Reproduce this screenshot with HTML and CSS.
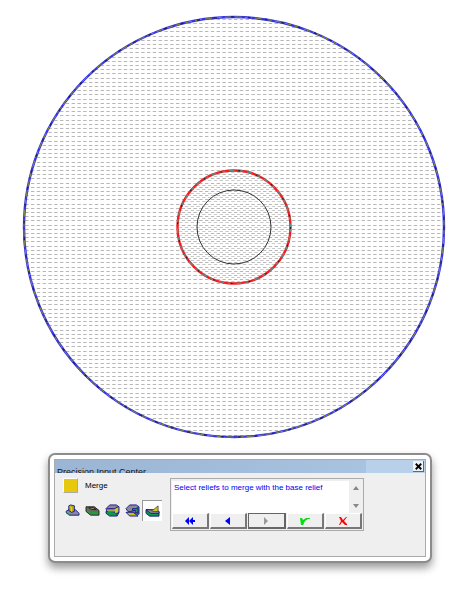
FILE: index.html
```html
<!DOCTYPE html>
<html lang="en">
<head>
<meta charset="utf-8">
<title>Precision Input Center</title>
<link rel="stylesheet" href="styles.css">
</head>
<body>
<svg class="drawing" viewBox="0 0 471 446" role="img" aria-label="Relief outline">
  <defs>
    <pattern id="hatch" x="2" y="1" width="29" height="21" patternUnits="userSpaceOnUse">
      <path d="M0 1.5h29M0 5.5h29M0 9.5h29M0 14.5h29M0 18.5h29" stroke="#b8b8b8" stroke-width="1" stroke-dasharray="3.4 2.4"/>
    </pattern>
    <pattern id="inner-hatch" x="5" y="3" width="29" height="21" patternUnits="userSpaceOnUse">
      <path d="M0 1.5h29M0 5.5h29M0 9.5h29M0 14.5h29M0 18.5h29" stroke="#cacaca" stroke-width="1" stroke-dasharray="3.4 2.4"/>
    </pattern>
  </defs>
  <circle cx="234" cy="227" r="210" fill="url(#hatch)"/>
  <circle cx="234" cy="227" r="56" fill="url(#inner-hatch)"/>
  <g fill="none">
    <circle cx="234" cy="227" r="210" stroke="#3434e4" stroke-width="2.4"/>
    <circle cx="234" cy="227" r="210" stroke="#8a8a3c" stroke-width="1" stroke-dasharray="7 3"/>
    <circle cx="234" cy="227" r="210" stroke="#20206c" stroke-width="1.4" stroke-dasharray="3 14"/>
    <circle cx="234" cy="227" r="56.5" stroke="#f81c1c" stroke-width="2.4"/>
    <circle cx="234" cy="227" r="56.5" stroke="#5c8c8c" stroke-width="1.4" stroke-dasharray="5 4"/>
    <circle cx="234" cy="227" r="56.5" stroke="#401818" stroke-width="1.2" stroke-dasharray="2 16"/>
    <circle cx="234" cy="227" r="37" stroke="#333"/>
  </g>
</svg>
<main class="panel">
  <section class="dialog">
    <header class="titlebar">
      <h1 class="title">Precision Input Center</h1>
      <button class="close" aria-label="Close"><svg width="7" height="7" viewBox="0 0 9 8"><path d="M1 0.5L8 7.5M8 0.5L1 7.5" stroke="#000" stroke-width="2.4"/></svg></button>
    </header>
    <div class="content">
      <div class="modes">
        <div class="mode"><span class="swatch"></span><span>Merge</span></div>
        <div class="tools">
          <button class="tool" aria-label="Add"><svg viewBox="0 0 16 14"><path d="M1 8l3-2 7 0 4 4v2H5l-4-3z" fill="#8a8a98" stroke="#18188c"/><path d="M1 9l4 3h10v1H5l-4-3z" fill="#0b9b42"/><path d="M4 2l2-1 4 1v6l-3 1-3-2z" fill="#b8aa18" stroke="#18188c"/><path d="M5 3l2 1v4" fill="none" stroke="#eee020"/></svg></button>
          <button class="tool" aria-label="Subtract"><svg viewBox="0 0 16 14"><path d="M1 3h9l5 4v5H6L1 8z" fill="#666" stroke="#222"/><path d="M4 4h5l3 2H7z" fill="#aaa018" stroke="#222"/><path d="M2 6l4 3v2L2 8zM7 9h7v2H7z" fill="#08b02e"/></svg></button>
          <button class="tool" aria-label="Merge high"><svg viewBox="0 0 16 14"><path d="M1 8h4l10 1-2 4H5l-4-3z" fill="#0b9b42" stroke="#18188c"/><path d="M1 5l4-4h7l3 2v6l-3 2-2-3H2z" fill="#8a8a98" stroke="#18188c"/><path d="M10 6l4-3v5l-3 2z" fill="#d4c820"/><path d="M2 7h8v1H3z" fill="#d4c820"/><path d="M2 5h8l4-2" fill="none" stroke="#18188c"/></svg></button>
          <button class="tool" aria-label="Merge low"><svg viewBox="0 0 16 14"><path d="M1 9h8l5 4H5z" fill="#c8bb20" stroke="#18188c"/><path d="M1 5l4-4h7l3 2v8h-3L8 8H3z" fill="#8a8a98" stroke="#18188c"/><path d="M8 5h3l3-1v6l-3-1V7H8z" fill="#08a73a" stroke="#18188c"/></svg></button>
          <button class="tool tool-active" aria-label="Merge" aria-pressed="true"><svg viewBox="0 0 16 14"><path d="M1 5h4l10 2v5H5L1 9z" fill="#0b9b42" stroke="#18188c"/><path d="M1 5l5 4h9V7l-6-2z" fill="#8a8a98" stroke="#18188c"/><path d="M5 5l3 1 6-5v6H8z" fill="#d0c420" stroke="#555545"/></svg></button>
        </div>
      </div>
      <div class="prompt">
        <div class="message">
          <p>Select reliefs to merge with the base relief</p>
          <div class="scroll">
            <button class="arrow" aria-label="Scroll up"><svg width="6" height="4" viewBox="0 0 6 4"><path d="M0 4l3-4 3 4z" fill="#888"/></svg></button>
            <button class="arrow" aria-label="Scroll down"><svg width="6" height="4" viewBox="0 0 6 4"><path d="M0 0h6L3 4z" fill="#888"/></svg></button>
          </div>
        </div>
        <div class="actions">
          <button class="action" aria-label="First"><svg width="10" height="8" viewBox="0 0 10 8"><path d="M0 4l4-4v8zM4 4l4-4v3h2v2H8v3z" fill="#00f"/></svg></button>
          <button class="action" aria-label="Back"><svg width="10" height="8" viewBox="0 0 10 8"><path d="M2 4l5-4v8z" fill="#00f"/></svg></button>
          <button class="action action-focus" aria-label="Next" disabled><svg width="10" height="8" viewBox="0 0 10 8"><path d="M3 0l4 4-4 4z" fill="#999"/></svg></button>
          <button class="action" aria-label="Accept"><svg width="10" height="8" viewBox="0 0 10 8"><path d="M0 1h2l1 2 3-2h4v1H8L5 4 3 8H1z" fill="#00e010"/></svg></button>
          <button class="action" aria-label="Cancel"><svg width="10" height="8" viewBox="0 0 10 8"><path d="M1 0h2l2 3 3-3h1L6 4l3 3v1H7L4 5 2 8H1l2-4z" fill="#f00"/></svg></button>
        </div>
      </div>
    </div>
  </section>
</main>
</body>
</html>
```
FILE: styles.css
```css
* { box-sizing: border-box; }
body { margin: 0; min-height: 100vh; background: #fff; font: 8px/12px "Liberation Sans", Arial, sans-serif; color: #000; }
button { padding: 0; margin: 0; border: 0; background: #efefef; display: flex; align-items: center; justify-content: center; }
.drawing { display: block; width: 100%; }
.panel { margin: 7px 39px 0 48px; padding: 4px; border: 2px solid #8c8c8c; border-radius: 7px; background: #fff; box-shadow: 0 5px 9px rgba(0, 0, 0, .4); }
.dialog { border: 1px solid #aaa; background: #efefef; }
.titlebar { display: flex; justify-content: space-between; height: 13px; overflow: hidden; background: linear-gradient(90deg, #9bb5d4 0%, #a7c3e0 84%, #b8d0ea 84%); }
.title { margin: 6px 0 0 2px; font-size: 9px; line-height: 12px; font-weight: normal; color: #111; }
.close { width: 11px; height: 11px; margin: 1px; background: #f2f2f2; border-right: 1px solid #666; border-bottom: 1px solid #666; }
.content { display: flex; gap: 8px; padding: 5px 61px 25px 7px; }
.modes { flex: none; width: 100px; }
.mode { display: flex; align-items: center; gap: 7px; padding-left: 1px; }
.swatch { width: 15px; height: 15px; background: #e6c90c; border: 1px solid #fff; border-right-color: #aaa; border-bottom-color: #aaa; }
.tools { display: flex; margin-top: 7px; }
.tool { width: 20px; height: 21px; flex: none; }
.tool svg { width: 15px; height: 13px; }
.tool-active { background: #fff; border-top: 1px solid #999; border-left: 1px solid #999; }
.prompt { flex: 1; min-width: 0; border: 1px solid #aaa; padding: 2px 1px 1px; }
.message { display: flex; justify-content: space-between; height: 32px; background: #fff; }
.message p { margin: 1px 2px; color: #0000f0; white-space: nowrap; }
.scroll { display: flex; flex-direction: column; justify-content: space-between; width: 13px; flex: none; background: #efefef; }
.arrow { height: 14px; width: 100%; }
.actions { display: grid; grid-template-columns: repeat(5, 1fr); gap: 1px; }
.action { height: 16px; border: 1px solid #fff; border-right: 2px solid #777; border-bottom: 2px solid #777; }
.action-focus { border: 1px solid #666; border-right-width: 2px; border-bottom-width: 2px; }
```
